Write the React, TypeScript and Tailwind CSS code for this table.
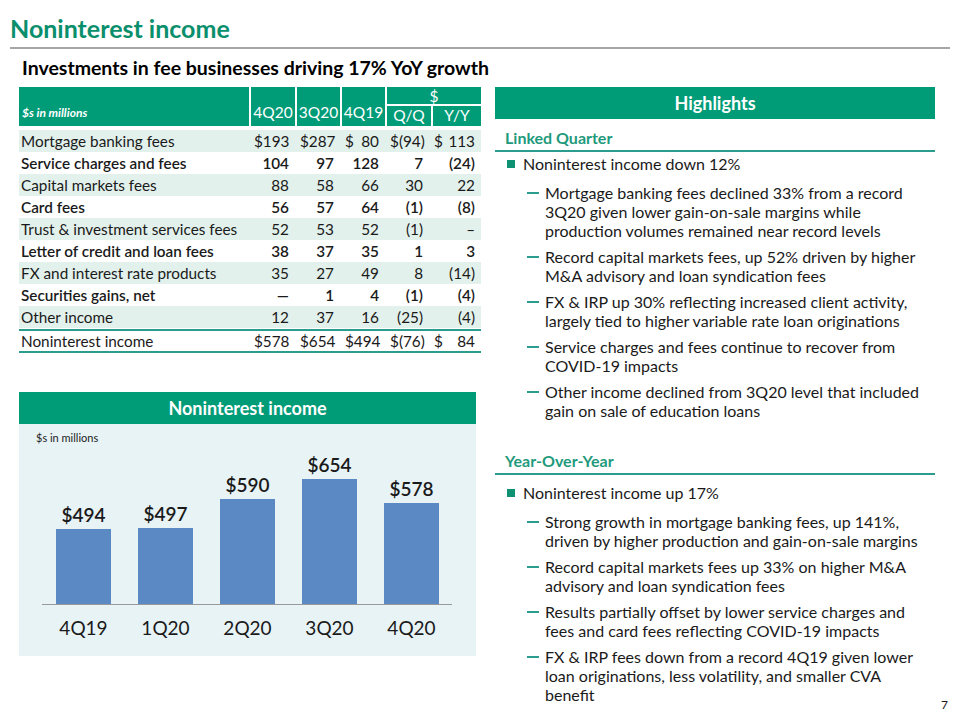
const rows = [
  { label: "Mortgage banking fees", v: ["$193", "$287", ["$", "80"], ["$", "(94)"], ["$", "113"]], bold: false },
  { label: "Service charges and fees", v: ["104", "97", "128", "7", "(24)"], bold: true },
  { label: "Capital markets fees", v: ["88", "58", "66", "30", "22"], bold: false },
  { label: "Card fees", v: ["56", "57", "64", "(1)", "(8)"], bold: true },
  { label: "Trust & investment services fees", v: ["52", "53", "52", "(1)", "–"], bold: false },
  { label: "Letter of credit and loan fees", v: ["38", "37", "35", "1", "3"], bold: true },
  { label: "FX and interest rate products", v: ["35", "27", "49", "8", "(14)"], bold: false },
  { label: "Securities gains, net", v: ["—", "1", "4", "(1)", "(4)"], bold: true },
  { label: "Other income", v: ["12", "37", "16", "(25)", "(4)"], bold: false },
];

const total = ["$578", "$654", "$494", ["$", "(76)"], ["$", "84"]];

const colW = ["w-[46px]", "w-[45px]", "w-[45px]", "w-[44px]", "w-[52px]"];

const bars = [
  { q: "4Q19", v: 494 },
  { q: "1Q20", v: 497 },
  { q: "2Q20", v: 590 },
  { q: "3Q20", v: 654 },
  { q: "4Q20", v: 578 },
];

const Cell = ({ val, w }: { val: string | string[]; w: string }) => (
  <div className={`${w} shrink-0 pr-[6px] pl-[5px] text-right`}>
    {Array.isArray(val) ? (
      <div className="flex justify-between">
        <span>{val[0]}</span>
        <span>{val[1]}</span>
      </div>
    ) : (
      val
    )}
  </div>
);

const Sub = ({ children }: { children: React.ReactNode }) => (
  <div className="flex mt-[7px] pr-[6px]">
    <span className="ml-[32px] w-[18px] shrink-0 pt-[9px]">
      <span className="block w-[12px] h-[2px] bg-[#2a9d8f]" />
    </span>
    <span>{children}</span>
  </div>
);

const Main = ({ children, top }: { children: React.ReactNode; top: string }) => (
  <div className={`flex items-center ${top} mb-[6px]`}>
    <span className="ml-[12px] mr-[8px] w-[8px] h-[8px] bg-[#0e9273] shrink-0" />
    <span>{children}</span>
  </div>
);

export default function App() {
  return (
    <div
      className="w-[960px] h-[720px] bg-white relative overflow-hidden text-[#1a1a1a]"
      style={{ fontFamily: 'Lato, "Noto Sans", sans-serif' }}
    >
      <div className="px-[10px] pt-[12px]">
        <h1 className="text-[25px] leading-[32px] font-bold text-[#0a8f6d]">Noninterest income</h1>
        <div className="mt-[3px] h-[2px] bg-[#a6a6a6]" />
        <h2 className="mt-[8px] ml-[12px] text-[19.5px] leading-[22px] font-bold text-black">
          Investments in fee businesses driving 17% YoY growth
        </h2>
      </div>

      <div className="flex mt-[8px]">
        {/* left column */}
        <div className="w-[490px] shrink-0 pl-[19px]">
          <div className="w-[462px]">
            {/* header */}
            <div className="flex h-[39px] bg-[#009b77] text-white text-[15.5px]">
              <div className="flex-1 flex items-end pb-[4px] pl-[3px] text-[12px] italic font-bold">$s in millions</div>
              {["4Q20", "3Q20", "4Q19"].map((h, i) => (
                <div
                  key={h}
                  className={`${colW[i]} shrink-0 border-l-2 border-white flex items-end justify-center pb-[2px]`}
                >
                  {h}
                </div>
              ))}
              <div className="w-[96px] shrink-0 border-l-2 border-white flex flex-col">
                <div className="h-[19px] text-center leading-[18px] border-b-2 border-white">$</div>
                <div className="flex flex-1">
                  <div className="w-[44px] text-center leading-[18px]">Q/Q</div>
                  <div className="flex-1 text-center leading-[18px] border-l-2 border-white">Y/Y</div>
                </div>
              </div>
            </div>
            {/* rows */}
            <div className="mt-[4px] text-[15.3px]">
              {rows.map((r, i) => (
                <div
                  key={r.label}
                  className={`flex h-[22px] leading-[22px] ${i % 2 === 0 ? "bg-[#e3f1ec]" : "bg-white"} ${
                    r.bold ? "font-semibold" : ""
                  }`}
                >
                  <div className="flex-1 pl-[2px] whitespace-nowrap">{r.label}</div>
                  {r.v.map((v, j) => (
                    <Cell key={j} val={v} w={colW[j]} />
                  ))}
                </div>
              ))}
              <div className="flex h-[24px] leading-[21px] border-t-2 border-b-2 border-[#2a9d8f] mt-[1px]">
                <div className="flex-1 pl-[2px]">Noninterest income</div>
                {total.map((v, j) => (
                  <Cell key={j} val={v} w={colW[j]} />
                ))}
              </div>
            </div>
          </div>

          {/* chart panel */}
          <div className="w-[457px] mt-[39px]">
            <div className="h-[32px] bg-[#009b77] text-white text-[18px] font-bold flex items-center justify-center">
              Noninterest income
            </div>
            <div className="h-[232px] bg-[#e7f3f5] relative">
              <div className="pt-[6px] pl-[17px] text-[11px] text-[#222]">$s in millions</div>
              <div className="absolute left-[23px] right-[24px] top-[180px] h-[1px] bg-[#999]" />
              <div className="absolute left-[37px] top-[0px] flex gap-[27px]">
                {bars.map((b) => {
                  const h = Math.round((b.v - 254) * 0.3125);
                  return (
                    <div key={b.q} className="w-[55px] flex flex-col items-center">
                      <div className="h-[180px] w-full flex flex-col justify-end items-center">
                        <div className="text-[19px] font-semibold leading-[22px] mb-[3px]">${b.v}</div>
                        <div className="w-full bg-[#5b89c3]" style={{ height: h }} />
                      </div>
                      <div className="mt-[13px] text-[19px] leading-[22px]">{b.q}</div>
                    </div>
                  );
                })}
              </div>
            </div>
          </div>
        </div>

        {/* right column */}
        <div className="w-[440px] shrink-0 ml-[5px] text-[16px] leading-[19px]">
          <div className="h-[32px] bg-[#009b77] text-white text-[18px] font-bold flex items-center justify-center">
            Highlights
          </div>
          <div className="mt-[9px] pl-[10px] pb-[3px] text-[16px] font-bold text-[#1f9a7c] border-b-2 border-[#2a9d8f]">
            Linked Quarter
          </div>
          <Main top="mt-[2px]">Noninterest income down 12%</Main>
          <div className="mt-[10px]">
            <Sub>
              Mortgage banking fees declined 33% from a record 3Q20 given lower gain-on-sale margins while
              production volumes remained near record levels
            </Sub>
            <Sub>Record capital markets fees, up 52% driven by higher M&amp;A advisory and loan syndication fees</Sub>
            <Sub>FX &amp; IRP up 30% reflecting increased client activity, largely tied to higher variable rate loan originations</Sub>
            <Sub>Service charges and fees continue to recover from COVID-19 impacts</Sub>
            <Sub>Other income declined from 3Q20 level that included gain on sale of education loans</Sub>
          </div>
          <div className="mt-[31px] pl-[10px] pb-[3px] text-[16px] font-bold text-[#1f9a7c] border-b-2 border-[#2a9d8f]">
            Year-Over-Year
          </div>
          <Main top="mt-[8px]">Noninterest income up 17%</Main>
          <div className="mt-[10px]">
            <Sub>Strong growth in mortgage banking fees, up 141%, driven by higher production and gain-on-sale margins</Sub>
            <Sub>Record capital markets fees up 33% on higher M&amp;A advisory and loan syndication fees</Sub>
            <Sub>Results partially offset by lower service charges and fees and card fees reflecting COVID-19 impacts</Sub>
            <Sub>FX &amp; IRP fees down from a record 4Q19 given lower loan originations, less volatility, and smaller CVA benefit</Sub>
          </div>
        </div>
      </div>

      <div className="absolute right-[12px] bottom-[6px] text-[12px]">7</div>
    </div>
  );
}
